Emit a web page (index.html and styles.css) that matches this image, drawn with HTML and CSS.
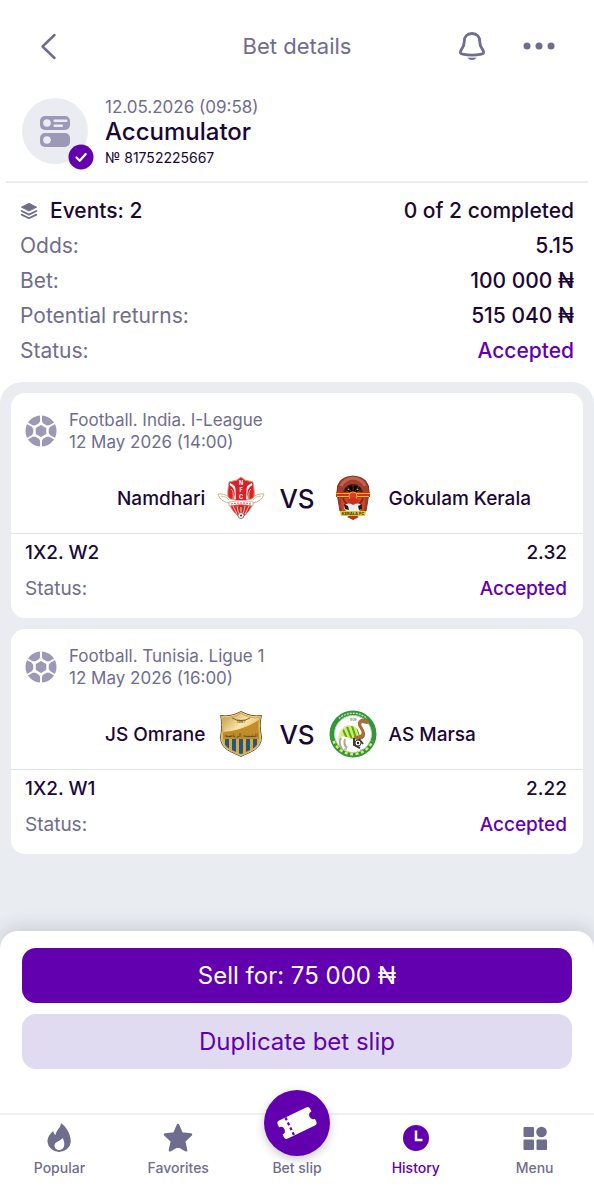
FILE: index.html
```html
<!DOCTYPE html>
<html lang="en">
<head>
    <meta charset="UTF-8">
    <meta name="viewport" content="width=device-width, initial-scale=1.0">
    <title>Bet details</title>
    <link rel="stylesheet" href="styles.css">
</head>
<body>
    <!-- Shared icons -->
    <svg class="sprite" aria-hidden="true">
        <symbol id="ball" viewBox="0 0 32 32">
            <circle cx="16" cy="16" r="15.5" fill="#9c98b5"/>
            <path d="M16 0v8M16 24v8M23 12l8-4.500M23 20l8 4.500M9 20l-8 4.500M9 12L1 7.500" stroke="#fff" stroke-width="2"/>
            <path d="M16 8.500l6.500 3.800v7.400L16 23.500l-6.500-3.800v-7.400z" fill="#9c98b5" stroke="#fff" stroke-width="2.500"/>
            <g fill="#fff"><circle cx="16" cy="8" r="1.800"/><circle cx="16" cy="24" r="1.800"/><circle cx="23" cy="12" r="1.800"/><circle cx="23" cy="20" r="1.800"/><circle cx="9" cy="12" r="1.800"/><circle cx="9" cy="20" r="1.800"/></g>
        </symbol>
    </svg>

    <header class="top-bar">
        <button class="icon-button" type="button" aria-label="Back">
            <svg width="32" height="32" viewBox="0 0 32 32"><path d="M15.500 5L3.500 16.500l12 11.500" fill="none" stroke="#6f6d8e" stroke-width="2.500" stroke-linecap="round" stroke-linejoin="round"/></svg>
        </button>
        <h1>Bet details</h1>
        <div class="top-actions">
            <button class="icon-button" type="button" aria-label="Notifications">
                <svg width="32" height="32" viewBox="0 0 32 32"><path d="M16 3.500c-5 0-7.700 3.400-7.700 7.700 0 5-1.300 6.300-3.100 8.700-1.800 2.600-.7 3.800 1.400 4.200 5.500 1.200 13.300 1.200 18.800 0 2.100-.4 3.200-1.600 1.400-4.200-1.800-2.400-3.100-3.700-3.100-8.700 0-4.300-2.700-7.700-7.700-7.700z" fill="none" stroke="#6f6d8e" stroke-width="2.800"/><path d="M11.500 27.500q4.500.6 9 0-1.500 2.500-4.500 2.500t-4.500-2.500z" fill="#6f6d8e"/></svg>
            </button>
            <button class="icon-button" type="button" aria-label="More">
                <svg width="32" height="32" viewBox="0 0 32 32" fill="#6f6d8e"><circle cx="4" cy="16" r="3.500"/><circle cx="16" cy="16" r="3.500"/><circle cx="28" cy="16" r="3.500"/></svg>
            </button>
        </div>
    </header>

    <section class="bet-head">
        <div class="bet-icon">
            <svg width="66" height="66" viewBox="0 0 66 66">
                <rect x="18" y="18" width="30" height="14" rx="5" fill="#9c98b5"/>
                <rect x="18" y="35" width="30" height="14" rx="5" fill="#9c98b5"/>
                <g fill="#e9edf2"><circle cx="25" cy="25" r="3.800"/><circle cx="25" cy="42" r="3.800"/><rect x="31.500" y="21.500" width="14" height="2.500" rx="1"/><rect x="31.500" y="26.500" width="9.500" height="2.500" rx="1"/></g>
            </svg>
            <svg class="bet-check" width="26" height="26" viewBox="0 0 26 26"><circle cx="13" cy="13" r="12.500" fill="#6200b0"/><path d="M8.500 13.500l3.200 3.200 6-6.700" fill="none" stroke="#fff" stroke-width="2.300" stroke-linecap="round" stroke-linejoin="round"/></svg>
        </div>
        <div>
            <p class="bet-date">12.05.2026 (09:58)</p>
            <h2>Accumulator</h2>
            <p class="bet-number">№ 81752225667</p>
        </div>
    </section>

    <dl class="summary">
        <div class="summary-row">
            <dt class="events">
                <svg width="18" height="18" viewBox="0 0 20 20"><path d="M10 1.500l8.500 4.200L10 10 1.500 5.700z" fill="#6f6d8e" stroke="#6f6d8e" stroke-linejoin="round"/><path d="M1.800 10L10 14l8.200-4M1.800 14L10 18l8.200-4" fill="none" stroke="#6f6d8e" stroke-width="2" stroke-linecap="round" stroke-linejoin="round"/></svg>
                Events: 2
            </dt>
            <dd>0 of 2 completed</dd>
        </div>
        <div class="summary-row"><dt>Odds:</dt><dd>5.15</dd></div>
        <div class="summary-row"><dt>Bet:</dt><dd>100 000 ₦</dd></div>
        <div class="summary-row"><dt>Potential returns:</dt><dd>515 040 ₦</dd></div>
        <div class="summary-row"><dt>Status:</dt><dd class="accepted">Accepted</dd></div>
    </dl>

    <main class="events-list">
        <article class="card">
            <div class="league">
                <svg width="32" height="32"><use href="#ball"/></svg>
                <p>Football. India. I-League<br>12 May 2026 (14:00)</p>
            </div>
            <div class="match">
                <div class="team home">
                    <span>Namdhari</span>
                    <svg class="crest" width="48" height="48" viewBox="0 0 48 48">
                        <path d="M24 3l4 3 8 2q2 10 1 18-3 12-13 18Q14 38 11 26q-1-8 1-18l8-2z" fill="#db2028" stroke="#c7a477"/>
                        <path d="M13 10q8 4 5 15M35 10q-8 4-5 15" fill="none" stroke="#fff" stroke-width="2"/>
                        <path d="M14 15q3 2 2 10M34 15q-3 2-2 10" fill="none" stroke="#f3b0a5"/>
                        <path d="M16 32l4 8M32 32l-4 8M20 32l2 9M28 32l-2 9" stroke="#f5bfb5"/>
                        <path d="M1 20q8-1 12 5 11 3 22 0 4-6 12-5-2 8-12 9-11-2-22 0Q3 28 1 20z" fill="#fff" stroke="#c9b98e"/>
                        <path d="M4 22q5 0 8 4M44 22q-5 0-8 4" fill="none" stroke="#d5c69e"/>
                        <path d="M18 8h12l-1 18H19z" fill="#db2028"/>
                        <path d="M12 28q12-3 24 0v4q-12-3-24 0z" fill="#fff" stroke="#d78277" stroke-width=".6"/>
                        <path d="M14 30q10-2 20 0" fill="none" stroke="#c5544d" stroke-dasharray="2 1"/>
                        <g fill="#fff" font-family="Inter, sans-serif" font-size="5.500" font-weight="700" text-anchor="middle"><text x="24" y="11">N</text><text x="24" y="18">F</text><text x="24" y="25">C</text></g>
                        <path d="M24 33v7" stroke="#b7975f" stroke-width="2"/><circle cx="24" cy="41.500" r="3" fill="#fff" stroke="#a66"/><circle cx="24" cy="41.500" r="1" fill="#712"/>
                    </svg>
                </div>
                <span class="versus">VS</span>
                <div class="team">
                    <svg class="crest" width="48" height="48" viewBox="0 0 48 48">
                        <path d="M8 19Q7 3 24 2q17 1 16 17l-3 18-13 8-13-8z" fill="#a43b2b" stroke="#843021"/>
                        <path d="M12 12q3-7 12-8 9 1 12 8" fill="none" stroke="#bd6551" stroke-width="3"/>
                        <path d="M14 20a10 10 0 0 1 20 0z" fill="#281713"/><path d="M17 20a7 7 0 0 1 14 0z" fill="#f0a623"/>
                        <path d="M24 10v10M18 12l6 8 6-8M15 16l9 4 9-4" stroke="#7d2a14"/>
                        <path d="M7 18h34v5H7z" fill="#d52d1d"/><path d="M7 19.500h34M8 22.500h32" stroke="#f7bd28" stroke-width="1.200"/>
                        <path d="M12 24h24l-1 14H13z" fill="#d64525"/>
                        <path d="M14 24q2 7 10 8 8-1 10-8" fill="none" stroke="#8d2117" stroke-width="2"/>
                        <circle cx="24" cy="22" r="4" fill="#d83c25" stroke="#f2a438"/><path d="M18 26q6-5 12 0l-2 4h-8z" fill="#c8321f"/>
                        <path d="M15 34q2-7 9-3 8-4 9 3-3 5-9 4-7 1-9-4z" fill="#eee"/><path d="M15 30l4 2 1 4-4-1zM29 32l4-2v5l-3 1z" fill="#211b1c"/>
                        <path d="M11 37h26l-1 5H12z" fill="#d9c937"/><text x="24" y="41" font-family="Inter, sans-serif" font-size="4" font-weight="700" text-anchor="middle" fill="#39320e">KERALA FC</text>
                        <path d="M18 43h12l-6 3z" fill="#c42d20"/>
                    </svg>
                    <span>Gokulam Kerala</span>
                </div>
            </div>
            <dl class="pick">
                <div><dt class="market">1X2. W2</dt><dd>2.32</dd></div>
                <div><dt>Status:</dt><dd class="accepted">Accepted</dd></div>
            </dl>
        </article>

        <article class="card">
            <div class="league">
                <svg width="32" height="32"><use href="#ball"/></svg>
                <p>Football. Tunisia. Ligue 1<br>12 May 2026 (16:00)</p>
            </div>
            <div class="match">
                <div class="team home">
                    <span>JS Omrane</span>
                    <svg class="crest" width="48" height="48" viewBox="0 0 48 48">
                        <defs>
                            <linearGradient id="gold" x1="0" y1="0" x2="1" y2="1"><stop offset="0" stop-color="#ad7b22"/><stop offset=".4" stop-color="#fbe6a8"/><stop offset="1" stop-color="#a87319"/></linearGradient>
                            <clipPath id="shield"><path d="M5 7q9 2 19-4 10 6 19 4-2 7 0 20c0 12-11 14-19 18C16 41 5 39 5 27q2-13 0-20z"/></clipPath>
                        </defs>
                        <g clip-path="url(#shield)">
                            <path d="M0 0h48v48H0z" fill="url(#gold)"/>
                            <path d="M6 22Q28 20 43 9v20H6z" fill="#c28d28"/>
                            <path d="M5 29h38v19H5z" fill="#d8a93c"/><path d="M8 29h4v19H8zM15 29h4v19h-4zM22 29h4v19h-4zM29 29h4v19h-4zM36 29h4v19h-4z" fill="#23577f"/>
                        </g>
                        <path d="M3.500 5.500Q14 7 24 1.500 34 7 44.500 5.500 42 14 44.500 27c0 13-12 15-20.500 19.500C15.500 42 3.500 40 3.500 27 6 14 3.500 5.500 3.500 5.500z" fill="none" stroke="#715124"/>
                        <path d="M5 7q9 2 19-4 10 6 19 4-2 7 0 20c0 12-11 14-19 18C16 41 5 39 5 27q2-13 0-20z" fill="none" stroke="#d9b15a" stroke-width="1.500"/>
                        <path d="M15 8q9 5 18 0" fill="none" stroke="#80602d"/><text x="24" y="13" text-anchor="middle" font-family="Inter, sans-serif" font-size="4" fill="#684b1b">1967</text>
                        <text x="24" y="27" text-anchor="middle" font-family="DejaVu Sans, sans-serif" font-size="5" fill="#283d45">الشبيبة الرياضية</text>
                    </svg>
                </div>
                <span class="versus">VS</span>
                <div class="team">
                    <svg class="crest" width="48" height="48" viewBox="0 0 48 48">
                        <defs><clipPath id="body"><path d="M12 26q1-10 10-10 7 1 8 7 2 7-6 6-9-3-12-3z"/></clipPath></defs>
                        <circle cx="24" cy="24" r="23.500" fill="#31963c"/><circle cx="24" cy="24" r="18.500" fill="#fff" stroke="#b7d8a7"/>
                        <path d="M4.500 31a21 21 0 0 0 39 0" fill="none" stroke="#d9e971" stroke-width="2.500" stroke-dasharray="3 2.500"/>
                        <path d="M10 8.500a21 21 0 0 1 28 0" fill="none" stroke="#b9dfb0" stroke-width="1.500" stroke-dasharray="2 1"/>
                        <path d="M9 31Q9 17 20 15q6 0 8 6l-3 5q-9-4-16 5z" fill="#e1e9ae"/>
                        <g clip-path="url(#body)"><path d="M10 13h24v20H10z" fill="#d9ec59"/><path d="M12 15l8 18M17 14l7 18M22 13l6 18M27 13l5 17" stroke="#52a532" stroke-width="2"/></g>
                        <path d="M25 26q11 0 6-7-5-7 1-10 6-1 9 4l-3 1-5-1q-2 1 1 5 6 11-5 12-4 0-4-4z" fill="#a96d3b"/>
                        <path d="M12 28q-3 5 1 11M16 29q-2 5 2 9" fill="none" stroke="#b1aa87" stroke-width="2"/>
                        <path d="M25 28v7l6 3M30 29l4 5" fill="none" stroke="#453c31" stroke-width="2"/><circle cx="29" cy="33" r="3" fill="#fff" stroke="#353535"/><circle cx="29" cy="33" r="1.200" fill="#222"/>
                        <path d="M15 39h3M31 40h3" stroke="#899a80"/><text x="24" y="10.500" text-anchor="middle" font-family="Inter, sans-serif" font-size="3" fill="#3c7245">1939</text>
                    </svg>
                    <span>AS Marsa</span>
                </div>
            </div>
            <dl class="pick">
                <div><dt class="market">1X2. W1</dt><dd>2.22</dd></div>
                <div><dt>Status:</dt><dd class="accepted">Accepted</dd></div>
            </dl>
        </article>
    </main>

    <footer class="bottom-panel">
        <div class="actions">
            <button class="btn btn-primary" type="button">Sell for: 75 000 ₦</button>
            <button class="btn btn-secondary" type="button">Duplicate bet slip</button>
        </div>
        <nav class="tab-bar">
            <a href="#">
                <svg width="32" height="32" viewBox="0 0 32 32"><path d="M18 1c-.2 5-4.500 6.500-5.500 12-1.200-.8-2-2.300-2.200-4C6 12.500 4.500 16 4.500 20a11.700 11 0 0 0 23.300 0C27.800 12 23.500 5 18 1zm-1.700 27c-3 0-4.800-2-4.800-4.600 0-3.500 5-3.600 8.200-7.400 3.300 6.500 1.300 12-3.400 12z" fill="#6f6d8e"/></svg>
                Popular
            </a>
            <a href="#">
                <svg width="32" height="32" viewBox="0 0 32 32"><path d="M16 3l3.700 8.600 9.300 1-6.900 6.400 2 9.300-8.100-4.700-8.100 4.700 2-9.300L3 12.600l9.300-1z" fill="#6f6d8e" stroke="#6f6d8e" stroke-width="2.500" stroke-linejoin="round"/></svg>
                Favorites
            </a>
            <a class="bet-slip" href="#">
                <span class="slip-circle">
                    <svg width="44" height="44" viewBox="0 0 44 44"><g transform="rotate(-26 22 22)"><path d="M7 12h30a3 3 0 0 1 3 3v3a4 4 0 0 0 0 8v3a3 3 0 0 1-3 3H7a3 3 0 0 1-3-3v-3a4 4 0 0 0 0-8v-3a3 3 0 0 1 3-3z" fill="#fff"/><path d="M14 12v20" stroke="#6200b0" stroke-width="2.200" stroke-dasharray="3 2.500"/></g></svg>
                </span>
                Bet slip
            </a>
            <a class="active" href="#">
                <svg width="32" height="32" viewBox="0 0 32 32"><circle cx="16" cy="16" r="13" fill="#6200b0"/><path d="M16 8.500V18h6.500" fill="none" stroke="#fff" stroke-width="2.500"/></svg>
                History
            </a>
            <a href="#">
                <svg width="32" height="32" viewBox="0 0 32 32" fill="#6f6d8e"><rect x="4.500" y="5" width="10.500" height="10" rx="1"/><circle cx="22.500" cy="10" r="5.300"/><rect x="4.500" y="17.500" width="10.500" height="10.500" rx="1"/><rect x="17.500" y="17.500" width="10.500" height="10.500" rx="1"/></svg>
                Menu
            </a>
        </nav>
    </footer>
</body>
</html>
```
FILE: styles.css
```css
* {
    box-sizing: border-box;
}

body {
    display: flex;
    flex-direction: column;
    min-height: 100vh;
    margin: 0;
    background-color: #fff;
    color: #1b0736;
    font-family: Inter, "Noto Sans", sans-serif;
}

h1, h2, p, dl, dd {
    margin: 0;
}

button {
    border: none;
    font-family: inherit;
    cursor: pointer;
}

svg {
    display: block;
    flex-shrink: 0;
}

.sprite {
    position: absolute;
    width: 0;
    height: 0;
}

.top-bar {
    display: grid;
    grid-template-columns: 1fr auto 1fr;
    align-items: center;
    height: 92px;
    padding: 0 39px;
}

.top-bar h1 {
    font-size: 22px;
    font-weight: 400;
    color: #6f6d8e;
}

.icon-button {
    width: 32px;
    padding: 0;
    background: transparent;
}

.top-actions {
    display: flex;
    justify-content: flex-end;
    gap: 35px;
}

.bet-head {
    display: flex;
    gap: 17px;
    margin: 0 6px;
    padding: 6px 16px 13px;
    border-bottom: 2px solid #ececef;
}

.bet-icon {
    position: relative;
    align-self: flex-start;
    border-radius: 50%;
    background-color: #e9edf2;
}

.bet-check {
    position: absolute;
    right: -6px;
    bottom: -6px;
}

.bet-date {
    font-size: 17px;
    line-height: 18px;
    color: #6f6d8e;
}

.bet-head h2 {
    font-size: 24px;
    font-weight: 500;
    line-height: 32px;
}

.bet-number {
    font-size: 14px;
    line-height: 20px;
}

.summary {
    padding: 10px 20px 14px;
    font-size: 21px;
    line-height: 35px;
}

.summary-row,
.pick div {
    display: flex;
    justify-content: space-between;
}

dt {
    color: #6f6d8e;
}

dd {
    font-weight: 500;
}

.events {
    display: flex;
    align-items: center;
    gap: 12px;
    color: #1b0736;
    font-weight: 500;
}

dd.accepted {
    color: #6200b0;
}

.events-list {
    display: flex;
    flex-direction: column;
    flex-grow: 1;
    gap: 11px;
    padding: 11px 11px 60px;
    border-radius: 22px 22px 0 0;
    background-color: #e9edf2;
}

.card {
    border-radius: 14px;
    background-color: #fff;
}

.league {
    display: flex;
    align-items: center;
    gap: 12px;
    padding: 16px 14px 0;
    font-size: 17px;
    line-height: 22px;
    color: #6f6d8e;
}

.match {
    display: grid;
    grid-template-columns: 1fr auto 1fr;
    align-items: center;
    gap: 14px;
    padding: 21px 14px 11px;
    border-bottom: 1px solid #e1e0e9;
    font-size: 19px;
}

.team {
    display: flex;
    align-items: center;
    gap: 12px;
    font-weight: 500;
}

.home {
    justify-content: flex-end;
}

.versus {
    font-size: 26px;
    font-weight: 500;
}

.pick {
    padding: 1px 16px 11px 14px;
    font-size: 19px;
    line-height: 36px;
}

.market {
    color: #1b0736;
    font-weight: 500;
}

.bottom-panel {
    position: relative;
    border-radius: 18px 18px 0 0;
    background-color: #fff;
    box-shadow: 0 -4px 18px rgba(40, 40, 60, 0.16);
}

/* The list colour runs on behind the rounded corners of the panel */
.bottom-panel {
    margin-top: -18px;
}

.events-list {
    padding-bottom: 95px;
}

.actions {
    display: flex;
    flex-direction: column;
    gap: 11px;
    padding: 17px 22px 44px;
}

.btn {
    height: 55px;
    border-radius: 14px;
    font-size: 24px;
}

.btn-primary {
    background-color: #6200b0;
    color: #fff;
}

.btn-secondary {
    background-color: #e0dbf0;
    color: #6200b0;
}

.tab-bar {
    display: flex;
    align-items: flex-end;
    height: 87px;
    padding-bottom: 24px;
    border-top: 2px solid #f1f1f3;
}

.tab-bar a {
    display: flex;
    flex: 1;
    flex-direction: column;
    align-items: center;
    gap: 6px;
    color: #6f6d8e;
    font-size: 14px;
    font-weight: 500;
    line-height: 16px;
    text-decoration: none;
}

.tab-bar .bet-slip {
    gap: 4px;
}

.tab-bar .active {
    color: #6200b0;
}

.slip-circle {
    display: flex;
    align-items: center;
    justify-content: center;
    width: 66px;
    height: 66px;
    border-radius: 50%;
    background-color: #6200b0;
    box-shadow: 0 3px 8px rgba(40, 40, 60, 0.25);
}
```
